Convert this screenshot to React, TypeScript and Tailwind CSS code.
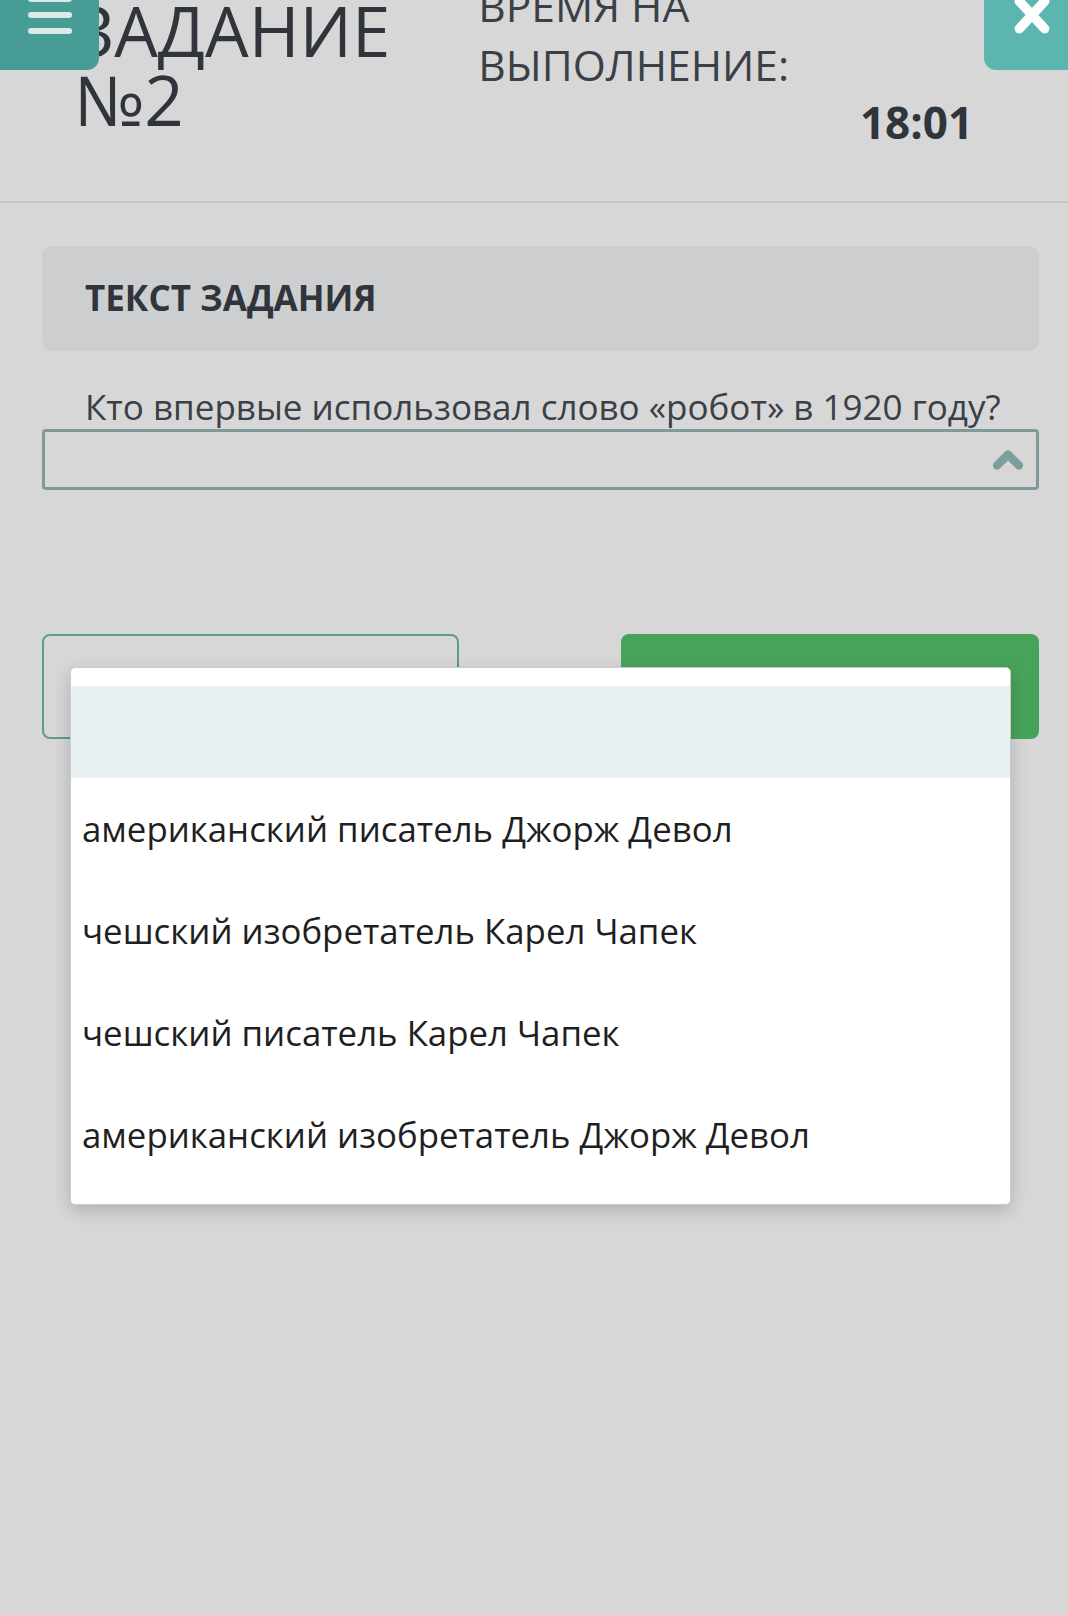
import { ChevronUp } from "lucide-react";

const options = [
  "американский писатель Джорж Девол",
  "чешский изобретатель Карел Чапек",
  "чешский писатель Карел Чапек",
  "американский изобретатель Джорж Девол",
];

function Header() {
  return (
    <header className="relative flex h-[203px] border-b-2 border-[#c8c8c8]">
      <h1 className="-mt-[4px] pl-[74px] text-[69px] leading-[69px] font-normal text-[#2f353b]">
        ЗАДАНИЕ
        <br />
        №2
      </h1>
      <div className="ml-[88px] -mt-[24px] flex flex-col">
        <div className="text-[42.5px] leading-[59px] text-[#3a4046]">
          ВРЕМЯ НА
          <br />
          ВЫПОЛНЕНИЕ:
        </div>
        <div className="self-end -mr-[184px] mt-[3px] text-[44px] leading-[50px] font-bold text-[#2f353b]">
          18:01
        </div>
      </div>

      {/* menu button sits over the title */}
      <button className="absolute left-0 top-0 flex h-[70px] w-[99px] flex-col items-center gap-[10px] rounded-br-[12px] bg-[#489c96]">
        <span className="-mt-[4px] h-[6px] w-[44px] rounded-full bg-[#dbe9e8]" />
        <span className="h-[6px] w-[44px] rounded-full bg-[#dbe9e8]" />
        <span className="h-[6px] w-[44px] rounded-full bg-[#dbe9e8]" />
      </button>
      <button className="absolute right-0 top-0 flex h-[70px] w-[84px] justify-center rounded-bl-[12px] bg-[#5ab6af] pl-[12px]">
        <svg viewBox="0 0 36 36" className="-mt-[3px] h-[38px] w-[38px]">
          <path
            d="M6 4 L30 30 M30 4 L6 30"
            stroke="#ffffff"
            strokeWidth="9"
            strokeLinecap="round"
          />
        </svg>
      </button>
    </header>
  );
}

function App() {
  return (
    <div className="relative min-h-[1615px] bg-[#d7d7d7] font-['Open_Sans',sans-serif]">
      <Header />
      <main className="pl-[42px] pr-[29px]">
        <div className="mt-[43px] flex h-[105px] items-center rounded-[10px] bg-[#cdced0] px-[43px]">
          <h2 className="text-[35px] font-bold text-[#2f353b]">ТЕКСТ ЗАДАНИЯ</h2>
        </div>
        <p className="mt-[34px] pl-[43px] text-[35px] leading-[44px] text-[#3a4046]">
          Кто впервые использовал слово «робот» в 1920 году?
        </p>
        <div className="flex h-[61px] items-center justify-end rounded-[4px] border-[3px] border-[#7e9a9a] pr-[6px]">
          <ChevronUp className="h-[44px] w-[44px] text-[#7e9d9d]" strokeWidth={4.5} />
        </div>
        <div className="mt-[144px] flex justify-between">
          <button className="h-[105px] w-[417px] rounded-[8px] border-2 border-[#5f9a90]" />
          <button className="h-[105px] w-[418px] rounded-[8px] bg-[#48a35a]" />
        </div>
      </main>

      {/* open dropdown list */}
      <ul className="absolute left-[70px] top-[667px] w-[941px] rounded-[5px] border border-[#c3cfcf] bg-white py-[18px] shadow-[0_6px_18px_rgba(0,0,0,0.18)]">
        <li className="h-[92px] bg-[#e8f0f2]" />
        {options.map((o) => (
          <li
            key={o}
            className="flex h-[102px] items-center pl-[11px] text-[34.8px] text-[#1f1f1f]"
          >
            {o}
          </li>
        ))}
      </ul>
    </div>
  );
}

export default App;
